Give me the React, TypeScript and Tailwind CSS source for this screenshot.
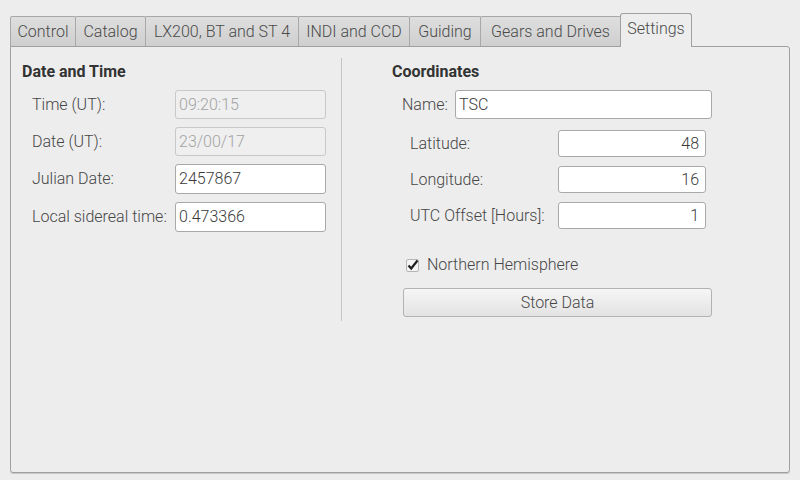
import React from 'react';

const tabs = [
  { label: 'Control', w: 66 },
  { label: 'Catalog', w: 71 },
  { label: 'LX200, BT and ST 4', w: 154 },
  { label: 'INDI and CCD', w: 112 },
  { label: 'Guiding', w: 72 },
  { label: 'Gears and Drives', w: 141 },
];

function Field({ value, disabled, right, w }: { value: string; disabled?: boolean; right?: boolean; w: string }) {
  return (
    <div
      className={`${w} rounded-[3px] border flex items-center px-[3px] text-[16px] ${
        disabled
          ? 'bg-[#efefef] border-[#c8c8c8] text-[#a3a3a3]'
          : 'bg-white border-[#a9a9a9] text-[#3a3a3a]'
      } ${right ? 'justify-end pr-[6px]' : ''}`}
    >
      {value}
    </div>
  );
}

export default function App() {
  return (
    <div
      className="w-[800px] h-[480px] bg-[#ededed] text-[#464646] font-light pl-[10px] pt-[13px] overflow-hidden"
      style={{ fontFamily: 'Roboto, "Noto Sans", sans-serif' }}
    >
      {/* tab strip */}
      <div className="flex items-end h-[33px] relative z-10">
        {tabs.map((t) => (
          <div
            key={t.label}
            style={{ width: t.w }}
            className="h-[30px] -mr-px border border-b-0 border-[#a8a8a8] rounded-t-[2px] bg-gradient-to-b from-[#dedede] to-[#cfcfcf] flex items-center justify-center text-[16px] text-[#4a4a4a]"
          >
            {t.label}
          </div>
        ))}
        <div className="w-[72px] h-[34px] -mb-px border border-b-0 border-[#a0a0a0] rounded-t-[3px] bg-[#ededed] flex items-center justify-center text-[16px] text-[#4a4a4a] pb-[3px]">
          Settings
        </div>
      </div>

      {/* panel */}
      <div className="w-[780px] h-[427px] border border-[#a0a0a0] rounded-b-[3px] rounded-tr-[3px] shadow-[0_1px_0_#c8c8c8] flex pt-[9px]">
        {/* Date and Time */}
        <div className="w-[331px] border-r border-[#c4c4c4] h-[263px] mt-[2px] pl-[11px]">
          <div className="font-bold text-[16px] text-[#333] h-[20px] leading-[20px] mt-[4px]">Date and Time</div>
          <div className="mt-[8px] pl-[10px] grid grid-cols-[143px_151px] gap-y-[8px] items-center text-[16px]">
            <div>Time (UT):</div>
            <Field value="09:20:15" disabled w="w-[151px] h-[29px]" />
            <div>Date (UT):</div>
            <Field value="23/00/17" disabled w="w-[151px] h-[29px]" />
            <div>Julian Date:</div>
            <Field value="2457867" w="w-[151px] h-[30px]" />
            <div>Local sidereal time:</div>
            <Field value="0.473366" w="w-[151px] h-[30px]" />
          </div>
        </div>

        {/* Coordinates */}
        <div className="pl-[50px] pt-[6px]">
          <div className="font-bold text-[16px] text-[#333] h-[20px] leading-[20px]">Coordinates</div>
          <div className="mt-[8px] pl-[10px] flex items-center text-[16px]">
            <div className="w-[53px]">Name:</div>
            <Field value="TSC" w="w-[257px] h-[29px]" />
          </div>
          <div className="mt-[11px] pl-[18px] grid grid-cols-[148px_148px] gap-y-[9px] items-center text-[16px]">
            <div>Latitude:</div>
            <Field value="48" right w="w-[148px] h-[27px]" />
            <div>Longitude:</div>
            <Field value="16" right w="w-[148px] h-[27px]" />
            <div>UTC Offset [Hours]:</div>
            <Field value="1" right w="w-[148px] h-[27px]" />
          </div>
          <div className="mt-[24px] pl-[14px] flex items-center gap-[8px] text-[16px]">
            <svg width="13" height="13" viewBox="0 0 13 13">
              <rect x="0.5" y="0.5" width="12" height="12" rx="1.5" fill="#f4f4f4" stroke="#b4b4b4" />
              <path d="M2.5 6.5 L5.2 9.5 L11.5 1.5" fill="none" stroke="#1e1e1e" strokeWidth="2.2" />
            </svg>
            <span>Northern Hemisphere</span>
          </div>
          <div className="mt-[11px] ml-[11px] w-[309px] h-[29px] border border-[#b2b2b2] rounded-[3px] bg-gradient-to-b from-[#f6f6f6] to-[#e3e3e3] flex items-center justify-center text-[16px] text-[#464646]">
            Store Data
          </div>
        </div>
      </div>
    </div>
  );
}
